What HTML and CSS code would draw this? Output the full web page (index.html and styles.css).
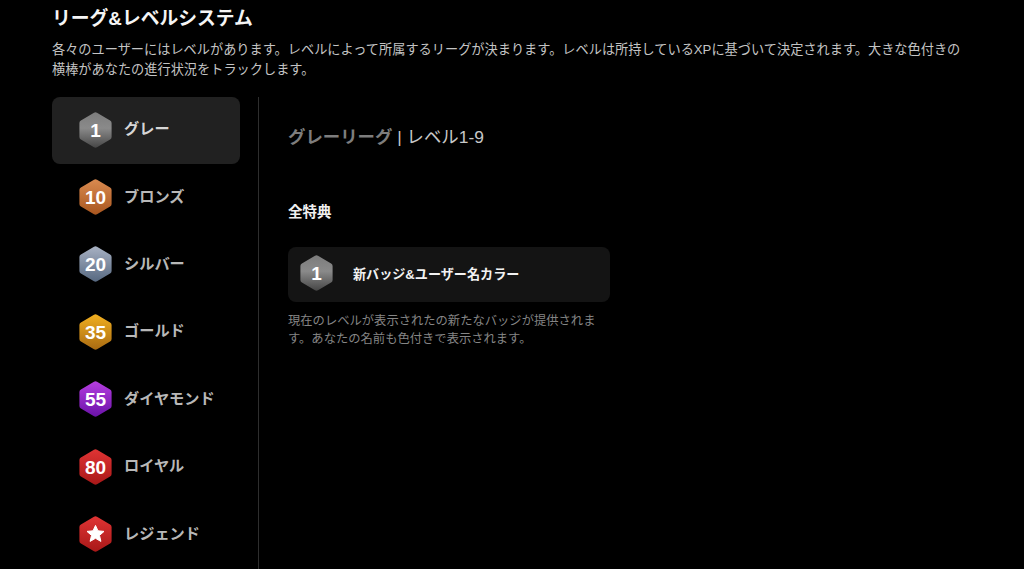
FILE: index.html
```html
<!DOCTYPE html>
<html lang="ja">
<head>
<meta charset="utf-8">
<title>リーグ&amp;レベルシステム</title>
<link rel="stylesheet" href="styles.css">
</head>
<body>
<svg class="defs" width="0" height="0" aria-hidden="true">
  <defs>
    <linearGradient id="g-gray" gradientUnits="userSpaceOnUse" x1="0" y1="0" x2="0" y2="36"><stop offset="0" stop-color="#7c7c7c"/><stop offset=".45" stop-color="#8a8a8a"/><stop offset="1" stop-color="#454545"/></linearGradient>
    <linearGradient id="g-bronze" gradientUnits="userSpaceOnUse" x1="0" y1="0" x2="0" y2="36"><stop offset="0" stop-color="#d98a50"/><stop offset="1" stop-color="#a8561f"/></linearGradient>
    <linearGradient id="g-silver" gradientUnits="userSpaceOnUse" x1="0" y1="0" x2="0" y2="36"><stop offset="0" stop-color="#a9b2c4"/><stop offset="1" stop-color="#566880"/></linearGradient>
    <linearGradient id="g-gold" gradientUnits="userSpaceOnUse" x1="0" y1="0" x2="0" y2="36"><stop offset="0" stop-color="#f2b020"/><stop offset="1" stop-color="#a86a12"/></linearGradient>
    <linearGradient id="g-diamond" gradientUnits="userSpaceOnUse" x1="0" y1="0" x2="0" y2="36"><stop offset="0" stop-color="#b63ee0"/><stop offset="1" stop-color="#6a12a8"/></linearGradient>
    <linearGradient id="g-red" gradientUnits="userSpaceOnUse" x1="0" y1="0" x2="0" y2="36"><stop offset="0" stop-color="#e03434"/><stop offset="1" stop-color="#a81818"/></linearGradient>
    <path id="hex" d="M16.5 3.4 L29.6 11 V25 L16.5 32.6 L3.4 25 V11 Z"/>
  </defs>
</svg>
<main class="page">
  <h1 class="title">リーグ&amp;レベルシステム</h1>
  <p class="intro">各々のユーザーにはレベルがあります。レベルによって所属するリーグが決まります。レベルは所持しているXPに基づいて決定されます。大きな色付きの横棒があなたの進行状況をトラックします。</p>
  <div class="layout">
    <nav class="leagues">
      <div class="league active">
        <svg class="badge" viewBox="0 0 33 36"><use href="#hex" class="hex-gray"/><text x="16.5" y="24.5" class="num">1</text></svg>
        <span class="league-name">グレー</span>
      </div>
      <div class="league">
        <svg class="badge" viewBox="0 0 33 36"><use href="#hex" class="hex-bronze"/><text x="16.5" y="24.5" class="num">10</text></svg>
        <span class="league-name">ブロンズ</span>
      </div>
      <div class="league">
        <svg class="badge" viewBox="0 0 33 36"><use href="#hex" class="hex-silver"/><text x="16.5" y="24.5" class="num">20</text></svg>
        <span class="league-name">シルバー</span>
      </div>
      <div class="league">
        <svg class="badge" viewBox="0 0 33 36"><use href="#hex" class="hex-gold"/><text x="16.5" y="24.5" class="num">35</text></svg>
        <span class="league-name">ゴールド</span>
      </div>
      <div class="league">
        <svg class="badge" viewBox="0 0 33 36"><use href="#hex" class="hex-diamond"/><text x="16.5" y="24.5" class="num">55</text></svg>
        <span class="league-name">ダイヤモンド</span>
      </div>
      <div class="league">
        <svg class="badge" viewBox="0 0 33 36"><use href="#hex" class="hex-red"/><text x="16.5" y="24.5" class="num">80</text></svg>
        <span class="league-name">ロイヤル</span>
      </div>
      <div class="league">
        <svg class="badge" viewBox="0 0 33 36"><use href="#hex" class="hex-red"/><path class="star" d="M16.5 9.4 L19 14.8 L25 15.4 L20.5 19.4 L21.9 25.4 L16.5 22.3 L11.1 25.4 L12.5 19.4 L8 15.4 L14 14.8 Z"/></svg>
        <span class="league-name">レジェンド</span>
      </div>
    </nav>
    <section class="detail">
      <h2 class="detail-title"><span class="detail-league">グレーリーグ</span> | レベル1-9</h2>
      <h3 class="perks-title">全特典</h3>
      <div class="perk">
        <svg class="badge" viewBox="0 0 33 36"><use href="#hex" class="hex-gray"/><text x="16.5" y="24.5" class="num">1</text></svg>
        <span class="perk-name">新バッジ&amp;ユーザー名カラー</span>
      </div>
      <p class="perk-desc">現在のレベルが表示されたの新たなバッジが提供されます。あなたの名前も色付きで表示されます。</p>
    </section>
  </div>
</main>
</body>
</html>
```

FILE: styles.css
```css
* { box-sizing: border-box; }
html, body { margin: 0; height: 100%; background: #000; overflow: hidden; }
body { font-family: "Liberation Sans", "Noto Sans CJK JP", sans-serif; color: #fff; }
.defs { position: absolute; }
.page { padding: 7px 52px 0; height: 569px; display: flex; flex-direction: column; }
.title { margin: 0; font-size: 18.8px; line-height: 24px; font-weight: 700; color: #f5f5f5; }
.intro { margin: 9px 0 0; width: 915px; font-size: 13.2px; line-height: 20px; color: #c4c4c4; }
.layout { display: flex; flex: 1; margin-top: 17px; min-height: 0; }
.leagues { width: 207px; padding-right: 18px; border-right: 1px solid #2e2e2e; display: flex; flex-direction: column; flex: none; }
.league { height: 67.4px; flex: none; padding: 0 0 0 27px; display: flex; align-items: center; gap: 12px; border-radius: 8px; }
.league.active { background: #212121; }
.league .badge { margin-bottom: 2px; }
.league-name { font-size: 15.2px; font-weight: 700; color: #b8b8b8; margin-bottom: 7px; white-space: nowrap; }
.active .league-name { color: #d6d6d6; }
.badge { width: 33px; height: 36px; flex: none; }
.num { font-family: "Liberation Sans", sans-serif; font-size: 19px; font-weight: 700; fill: #fff; text-anchor: middle; }
.star { fill: #fff; stroke: #fff; stroke-width: 1; stroke-linejoin: round; }
.hex-gray, .hex-bronze, .hex-silver, .hex-gold, .hex-diamond, .hex-red { stroke-width: 6; stroke-linejoin: round; }
.hex-gray { fill: url(#g-gray); stroke: url(#g-gray); }
.hex-bronze { fill: url(#g-bronze); stroke: url(#g-bronze); }
.hex-silver { fill: url(#g-silver); stroke: url(#g-silver); }
.hex-gold { fill: url(#g-gold); stroke: url(#g-gold); }
.hex-diamond { fill: url(#g-diamond); stroke: url(#g-diamond); }
.hex-red { fill: url(#g-red); stroke: url(#g-red); }
.detail { padding: 28px 0 0 29px; width: 351px; flex: none; }
.detail-title { margin: 0; font-size: 17.4px; line-height: 24px; font-weight: 400; color: #c8c8c8; }
.detail-league { font-weight: 700; color: #7d7d7d; }
.perks-title { margin: 53px 0 0; font-size: 14.5px; line-height: 20px; font-weight: 700; color: #f0f0f0; }
.perk { margin-top: 25px; height: 55px; width: 322px; padding: 0 12px 3px; display: flex; align-items: center; gap: 20px; background: #141414; border-radius: 8px; }
.perk-name { font-size: 13.1px; font-weight: 700; color: #f2f2f2; }
.perk-desc { margin: 10px 0 0; width: 322px; font-size: 12.3px; line-height: 18px; color: #858585; }
```
